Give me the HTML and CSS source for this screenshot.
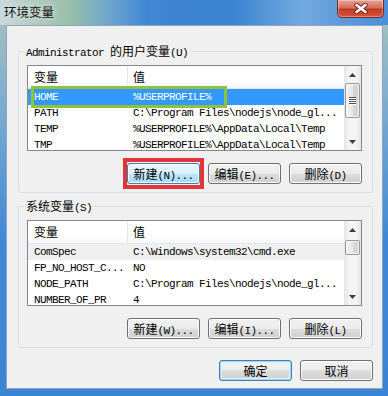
FILE: index.html
```html
<!DOCTYPE html>
<html lang="zh-CN">

<head>
    <meta charset="UTF-8">
    <meta name="viewport" content="width=device-width, initial-scale=1.0">
    <title>环境变量</title>
    <link rel="stylesheet" href="styles.css">
</head>

<body>
    <div class="window">
        <div class="titlebar">
            <span class="title">环境变量</span>
            <a href="#" class="close-button" title="关闭">
                <svg width="14" height="11" viewBox="0 0 14 11">
                    <path d="M2.5 2 L11.5 9 M11.5 2 L2.5 9" stroke="#6b2118" stroke-width="4.4" stroke-linecap="round" fill="none"/>
                    <path d="M2.5 2 L11.5 9 M11.5 2 L2.5 9" stroke="#fff" stroke-width="2.6" stroke-linecap="round" fill="none"/>
                </svg>
            </a>
        </div>

        <div class="client">
            <fieldset class="group">
                <legend><span class="mono">Administrator </span>的用户变量<span class="mono">(U)</span></legend>
                <div class="list-view">
                    <div class="list-rows">
                        <div class="list-header"><span class="col-name">变量</span><span class="col-value">值</span></div>
                        <div class="list-row selected"><span class="col-name">HOME</span><span class="col-value">%USERPROFILE%</span></div>
                        <div class="list-row"><span class="col-name">PATH</span><span class="col-value">C:\Program Files\nodejs\node_gl...</span></div>
                        <div class="list-row"><span class="col-name">TEMP</span><span class="col-value">%USERPROFILE%\AppData\Local\Temp</span></div>
                        <div class="list-row"><span class="col-name">TMP</span><span class="col-value">%USERPROFILE%\AppData\Local\Temp</span></div>
                    </div>
                    <div class="scrollbar">
                        <div class="scroll-arrow">
                            <svg width="7" height="4" viewBox="0 0 7 4"><path d="M0 4 L3.5 0 L7 4 Z" fill="#3c3c3c"/></svg>
                        </div>
                        <div class="scroll-track">
                            <div class="scroll-thumb thumb-user">
                                <span></span><span></span><span></span><span></span>
                            </div>
                        </div>
                        <div class="scroll-arrow">
                            <svg width="7" height="4" viewBox="0 0 7 4"><path d="M0 0 L3.5 4 L7 0 Z" fill="#3c3c3c"/></svg>
                        </div>
                    </div>
                    <div class="mark-green"></div>
                </div>
                <div class="button-row">
                    <button class="btn hot marked">新建<span class="mono">(N)...</span></button>
                    <button class="btn">编辑<span class="mono">(E)...</span></button>
                    <button class="btn">删除<span class="mono">(D)</span></button>
                </div>
            </fieldset>

            <fieldset class="group">
                <legend>系统变量<span class="mono">(S)</span></legend>
                <div class="list-view">
                    <div class="list-rows">
                        <div class="list-header"><span class="col-name">变量</span><span class="col-value">值</span></div>
                        <div class="list-row inactive"><span class="col-name">ComSpec</span><span class="col-value">C:\Windows\system32\cmd.exe</span></div>
                        <div class="list-row"><span class="col-name">FP_NO_HOST_C...</span><span class="col-value">NO</span></div>
                        <div class="list-row"><span class="col-name">NODE_PATH</span><span class="col-value">C:\Program Files\nodejs\node_gl...</span></div>
                        <div class="list-row"><span class="col-name">NUMBER_OF_PR</span><span class="col-value">4</span></div>
                    </div>
                    <div class="scrollbar">
                        <div class="scroll-arrow">
                            <svg width="7" height="4" viewBox="0 0 7 4"><path d="M0 4 L3.5 0 L7 4 Z" fill="#3c3c3c"/></svg>
                        </div>
                        <div class="scroll-track">
                            <div class="scroll-thumb thumb-system"></div>
                        </div>
                        <div class="scroll-arrow">
                            <svg width="7" height="4" viewBox="0 0 7 4"><path d="M0 0 L3.5 4 L7 0 Z" fill="#3c3c3c"/></svg>
                        </div>
                    </div>
                </div>
                <div class="button-row">
                    <button class="btn">新建<span class="mono">(W)...</span></button>
                    <button class="btn">编辑<span class="mono">(I)...</span></button>
                    <button class="btn">删除<span class="mono">(L)</span></button>
                </div>
            </fieldset>

            <div class="dialog-buttons">
                <button class="btn default">确定</button>
                <button class="btn">取消</button>
            </div>
        </div>
    </div>
</body>

</html>
```

FILE: styles.css
```css
body {
    margin: 0;
    background: #3b86d4;
    font-family: "Noto Sans CJK SC", sans-serif;
    color: #000;
}

.window {
    width: 388px;
    height: 396px;
    display: flex;
    flex-direction: column;
    overflow: hidden;
    background: linear-gradient(to bottom, #a9c5bd 0, #7aabd0 110px, #3d88d6 240px, #3a86d5 100%);
}

/* Title bar */

.titlebar {
    height: 25px;
    flex: none;
    display: flex;
    justify-content: space-between;
    align-items: flex-start;
    background: linear-gradient(to right, #c9d8de 0%, #b4ccc2 8%, #99bfa9 18%, #6ea5cf 28%, #3f86d3 38%, #3a84d2 60%, #73aadf 78%, #5d9bdb 88%, #4a8fd7 100%);
}

.title {
    padding-left: 4px;
    font-size: 12.5px;
    line-height: 24px;
    color: #111;
    text-shadow: 0 0 6px rgba(255, 255, 255, 0.9);
}

.close-button {
    width: 47px;
    height: 18px;
    margin-right: 4px;
    display: flex;
    align-items: center;
    justify-content: center;
    box-sizing: border-box;
    border: 1px solid #7a2b22;
    border-top: none;
    border-radius: 0 0 5px 5px;
    background: linear-gradient(#e7a699 0%, #d66b5a 45%, #c23a27 55%, #d8553a 100%);
    box-shadow: inset 0 0 0 1px rgba(255, 255, 255, 0.3);
}

/* Client area */

.client {
    flex: 1;
    margin: 0 5px 7px 6px;
    padding: 0 9px 0 11px;
    border: 1px solid #8fa4bd;
    background: #f0f0f0;
    display: flex;
    flex-direction: column;
}

.group {
    margin: 17px 0 0;
    padding: 6px 10px 8px 8px;
    min-width: 0;
    border: 1px solid #d5dfe5;
    border-radius: 3px;
}

.group + .group {
    margin-top: 5px;
}

.group legend {
    margin-left: -3px;
    padding: 0 2px;
    font-size: 12px;
    line-height: 16px;
    height: 16px;
}

.mono {
    font-family: "Liberation Mono", monospace;
    font-size: 11px;
    line-height: 1;
    letter-spacing: -0.6px;
}

/* List view */

.list-view {
    position: relative;
    height: 86px;
    box-sizing: border-box;
    border: 1px solid #828790;
    background: #fff;
    display: flex;
}

.list-rows {
    flex: 1;
    min-width: 0;
    overflow: hidden;
}

.list-header {
    display: flex;
    height: 23px;
    box-sizing: border-box;
    font-size: 12px;
    line-height: 22px;
    background: linear-gradient(#fff, #fff 60%, #f5f6f8);
    border-bottom: 1px solid #e3e6ea;
}

.list-header .col-name {
    border-right: 1px solid #e3e8ee;
}

.col-name {
    flex: none;
    width: 100px;
    padding-left: 6px;
    box-sizing: border-box;
    white-space: nowrap;
    overflow: hidden;
}

.col-value {
    padding-left: 5px;
    white-space: nowrap;
}

.list-row {
    display: flex;
    height: 16px;
    line-height: 16px;
    font-family: "Liberation Mono", monospace;
    font-size: 11px;
    letter-spacing: -0.6px;
}

.list-row.selected {
    background: #3399ff;
    color: #fff;
}

.list-row.inactive {
    background: #f0f0f0;
}

/* Scrollbar */

.scrollbar {
    width: 17px;
    flex: none;
    display: flex;
    flex-direction: column;
    background: linear-gradient(to right, #e4e4e4, #f4f4f4 30%, #f4f4f4 70%, #e4e4e4);
}

.scroll-arrow {
    height: 17px;
    flex: none;
    display: flex;
    align-items: center;
    justify-content: center;
}

.scroll-track {
    flex: 1;
}

.scroll-thumb {
    margin: 0 1px;
    box-sizing: border-box;
    border: 1px solid #979797;
    border-radius: 2px;
    background: linear-gradient(to right, #f3f3f3, #e6e6e6 50%, #d8d8d8 51%, #d2d2d2);
    box-shadow: inset 0 0 0 1px rgba(255, 255, 255, 0.7);
    display: flex;
    flex-direction: column;
    align-items: center;
    justify-content: center;
    gap: 1px;
}

.scroll-thumb span {
    width: 7px;
    height: 1px;
    background: #4f4f4f;
    box-shadow: 0 1px 0 #fff;
}

.thumb-user {
    height: 35px;
}

.thumb-system {
    height: 15px;
    margin-top: 2px;
}

/* Buttons */

.button-row,
.dialog-buttons {
    display: flex;
    justify-content: flex-end;
    gap: 8px;
}

.button-row {
    margin-top: 12px;
}

.dialog-buttons {
    margin-top: 12px;
}

.btn {
    position: relative;
    width: 73px;
    height: 21px;
    padding: 0;
    border: 1px solid #707070;
    border-radius: 3px;
    background: linear-gradient(#f2f2f2, #ebebeb 50%, #dddddd 50%, #cfcfcf);
    box-shadow: inset 0 0 0 1px #fcfcfc;
    font-family: "Noto Sans CJK SC", sans-serif;
    font-size: 12px;
    line-height: 19px;
    color: #000;
}

.btn.hot {
    border-color: #3c7fb1;
    background: linear-gradient(#eaf6fd, #d9f0fc 50%, #bee6fd 50%, #a7d9f5);
}

.btn.default {
    border-color: #3c7fb1;
    box-shadow: inset 0 0 0 1px #9fd9f7, inset 0 0 0 2px #dff1fb;
}

/* Annotation marks */

.marked::after {
    content: "";
    position: absolute;
    top: -6px;
    left: -5px;
    right: -5px;
    bottom: -6px;
    border: 4px solid #e2353b;
}

.mark-green {
    position: absolute;
    left: 3px;
    top: 20px;
    width: 196px;
    height: 22px;
    box-sizing: border-box;
    border: 3px solid #92c13b;
}
```
